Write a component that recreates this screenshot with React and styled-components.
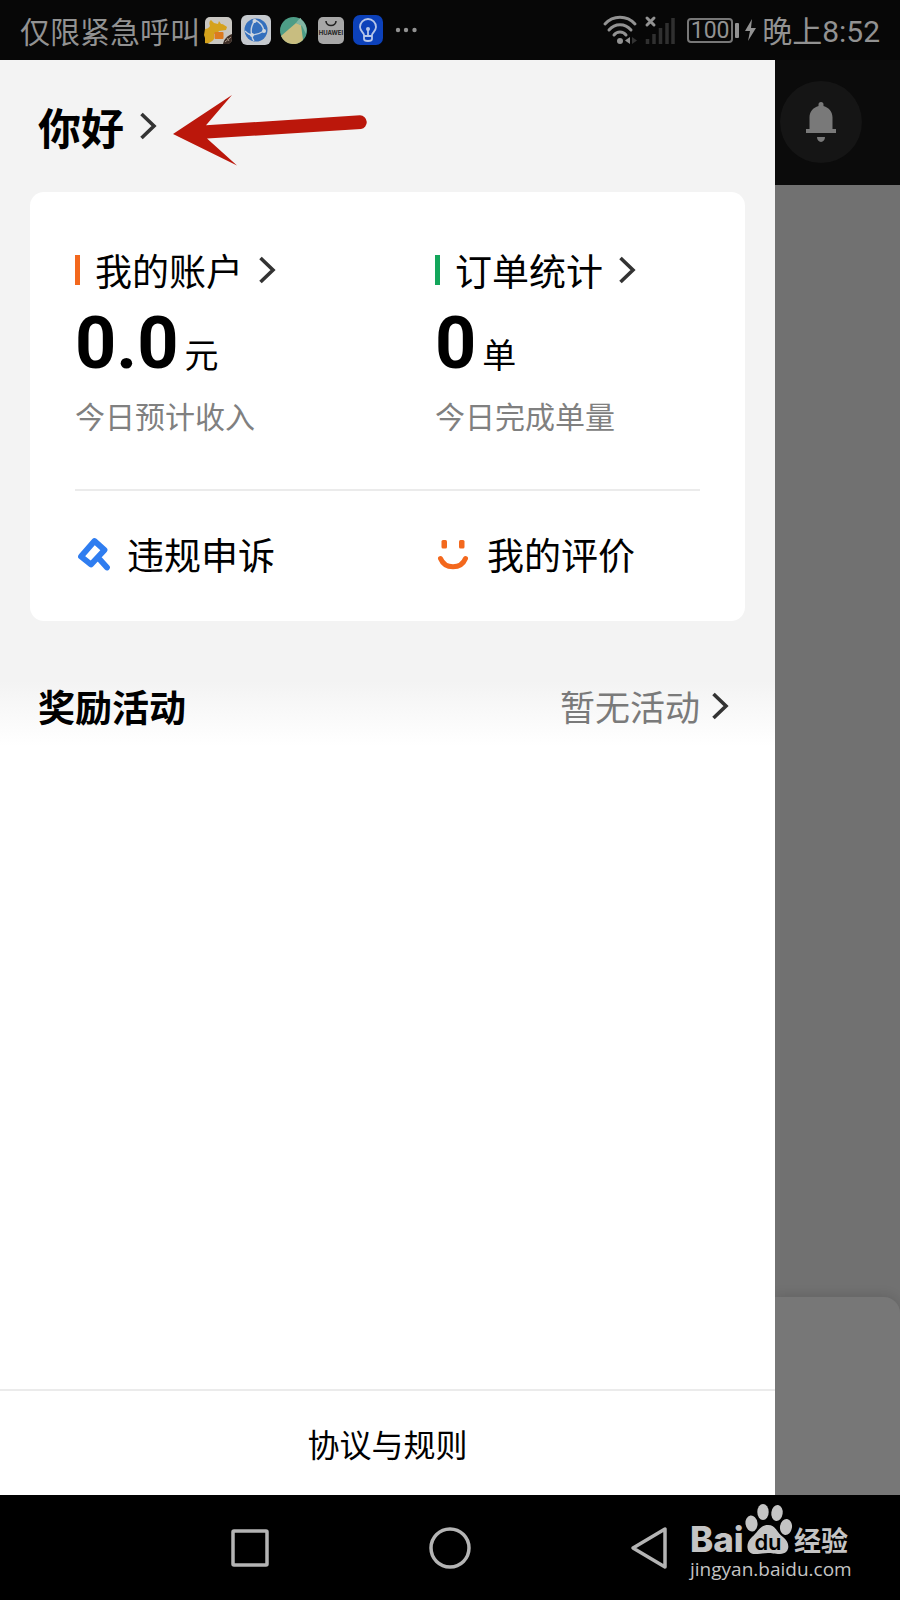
import React from "react";
import styled, { createGlobalStyle } from "styled-components";

const GlobalStyle = createGlobalStyle`
  * { box-sizing: border-box; }
  body {
    margin: 0;
    background: #000;
    color: #000;
    font-family: "Noto Sans CJK SC", sans-serif;
  }
  h1, h2, p { margin: 0; }
  button {
    border: 0;
    padding: 0;
    background: none;
    color: inherit;
    font: inherit;
    text-align: left;
    cursor: pointer;
  }
  a { color: inherit; text-decoration: none; }
  svg { display: block; flex: none; overflow: visible; }
`;

const Page = styled.div`
  display: flex;
  flex-direction: column;
  min-height: 100vh;
`;

/* Status bar */
const StatusBar = styled.header`
  display: flex;
  align-items: center;
  justify-content: space-between;
  height: 60px;
  padding: 0 20px;
  background: #070707;
  color: #929292;
  font-size: 30px;
  line-height: 40px;
  white-space: nowrap;
`;

const StatusGroup = styled.div`
  display: flex;
  align-items: center;
  gap: ${({ $gap }) => $gap}px;
`;

const Battery = styled.span`
  display: flex;
  align-items: center;
  gap: 2px;
  &::after {
    content: "";
    width: 4px;
    height: 15px;
    border-radius: 1px;
    background: #929292;
  }
`;

const BatteryLevel = styled.span`
  width: 46px;
  height: 25px;
  border: 2px solid #777;
  border-radius: 4px;
  font-family: Roboto, sans-serif;
  font-size: 23px;
  line-height: 22px;
  text-align: center;
`;

const Digits = styled.span`
  font-family: Roboto, sans-serif;
`;

/* Main area */
const Main = styled.div`
  flex: 1;
  display: grid;
  grid-template-columns: 31fr 5fr;
`;

const Drawer = styled.main`
  display: flex;
  flex-direction: column;
  background: #fff;
`;

const Profile = styled.div`
  display: flex;
  align-items: center;
  gap: 16px;
  height: 132px;
  padding-left: 38px;
  background: #f3f3f3;
`;

const ProfileButton = styled.button`
  display: flex;
  align-items: center;
  gap: 16px;
`;

const Greeting = styled.h1`
  font-size: 43px;
  line-height: 60px;
  font-weight: 700;
`;

const CardArea = styled.div`
  padding: 0 30px;
  background: #f3f3f3;
`;

const Card = styled.section`
  padding: 0 45px;
  border-radius: 14px;
  background: #fff;
`;

const Columns = styled.div`
  display: grid;
  grid-template-columns: 1fr 1fr;
  column-gap: 95px;
`;

const Stats = styled(Columns)`
  padding: 53px 0 52px;
  border-bottom: 2px solid #ebebeb;
`;

const Links = styled(Columns)`
  padding: 37px 0 41px;
`;

const Stat = styled.button`
  display: flex;
  flex-direction: column;
`;

const StatTitle = styled.span`
  display: flex;
  align-items: center;
  height: 50px;
  font-size: 37px;
  line-height: 50px;
  white-space: nowrap;
  &::before {
    content: "";
    width: 5px;
    height: 30px;
    margin-right: 15px;
    background: ${({ $accent }) => $accent};
  }
  svg { margin-left: 16px; }
`;

const StatValue = styled.span`
  display: flex;
  align-items: baseline;
  gap: 6px;
  height: 98px;
  font-family: Roboto, sans-serif;
  font-size: 72px;
  line-height: 98px;
  font-weight: 700;
`;

const Unit = styled.span`
  font-family: "Noto Sans CJK SC", sans-serif;
  font-size: 34px;
  font-weight: 400;
`;

const StatNote = styled.span`
  font-size: 30px;
  line-height: 44px;
  color: #808080;
  white-space: nowrap;
`;

const LinkButton = styled.button`
  display: flex;
  align-items: center;
  gap: 17px;
  font-size: 37px;
  line-height: 52px;
  white-space: nowrap;
`;

const Rewards = styled.section`
  display: flex;
  align-items: center;
  justify-content: space-between;
  height: 170px;
  padding: 0 46px 0 38px;
  background: linear-gradient(#f3f3f3 60px, #fff 125px);
`;

const RewardsTitle = styled.h2`
  font-size: 37px;
  line-height: 52px;
  font-weight: 700;
`;

const RewardsButton = styled.button`
  display: flex;
  align-items: center;
  gap: 12px;
  font-size: 35px;
  line-height: 52px;
  color: #7a7a7a;
`;

const Rules = styled.footer`
  display: flex;
  align-items: center;
  justify-content: center;
  height: 106px;
  margin-top: auto;
  border-top: 2px solid #ebebeb;
  font-size: 32px;
  line-height: 48px;
`;

/* Dimmed page behind the drawer */
const Backdrop = styled.aside`
  display: flex;
  flex-direction: column;
  overflow: hidden;
  background: #717171;
`;

const BackdropBar = styled.div`
  height: 125px;
  padding: 21px 5px;
  background: #0b0b0b;
`;

const BellButton = styled.button`
  display: grid;
  place-items: center;
  width: 82px;
  height: 82px;
  border-radius: 50%;
  background: #151515;
`;

const Sheet = styled.div`
  height: 198px;
  margin-top: auto;
  border-top-right-radius: 16px;
  background: #777;
  box-shadow: 0 -2px 12px rgba(0, 0, 0, 0.12);
`;

/* System navigation */
const NavBar = styled.nav`
  position: relative;
  display: flex;
  align-items: center;
  justify-content: center;
  gap: 156px;
  height: 105px;
  background: #000;
`;

const Watermark = styled.a`
  position: absolute;
  top: 4px;
  right: 40px;
  width: 170px;
  color: #c4c4c4;
  font-family: "Open Sans", "Noto Sans", sans-serif;
  font-size: 19px;
  font-weight: 500;
  line-height: 24px;
`;

const Chevron = () => (
  <svg width="17" height="28" viewBox="0 0 17 28" fill="none" stroke="#333" strokeWidth="3.600" aria-hidden="true">
    <path d="M1.500 2 14 14 1.500 26" />
  </svg>
);

const PointerArrow = () => (
  <svg width="197" height="80" viewBox="0 0 197 80" fill="#bb170b" aria-hidden="true">
    <path d="M0 48 59 9 33 39.300 187 29.300a6.900 6.900 0 0 1 1 13.700L34 52.600 64 79.600Z" />
  </svg>
);

const Gavel = () => (
  <svg width="35" height="36" viewBox="0 0 35 36" fill="none" stroke="#2f7df0" strokeWidth="5.800" strokeLinejoin="round" strokeLinecap="round" aria-hidden="true">
    <path d="M19.500 5 29.500 14 16 28.500 6 20.500ZM23 21.500 32 31.500" />
  </svg>
);

const Smile = () => (
  <svg width="35" height="36" viewBox="0 0 35 36" aria-hidden="true">
    <g fill="#f3681d">
      <rect x="6.500" y="4" width="5.500" height="8.500" rx="1.500" />
      <rect x="24" y="4" width="5.500" height="8.500" rx="1.500" />
    </g>
    <path d="M5.500 22.500C10 33.500 26 33.500 30.500 22.500" fill="none" stroke="#f3681d" strokeWidth="5" strokeLinecap="round" />
  </svg>
);

const Bell = () => (
  <svg width="32" height="40" viewBox="0 0 32 40" fill="#797979" aria-hidden="true">
    <path d="M13.500 4V2.500a2.500 2.500 0 0 1 5 0V4C24 5.500 27.500 10 27.500 15.500V27H31v4H1v-4h3.500V15.500C4.500 10 8 5.500 13.500 4ZM12 35h8a4 5 0 0 1-8 0Z" />
  </svg>
);

const AppIcons = () => (
  <svg width="214" height="30" viewBox="0 0 214 30" aria-hidden="true">
    <rect x="1" y="2" width="27" height="27" rx="5" fill="#c9c7c2" />
    <path d="M1 14c2 0 4-1 5-3-1-2-1-5 1-6l3 3 4 1 1-3 2 3c3 0 4 2 6 3l-1 3-7 1c-1 2-3 3-5 3v5c-2 3-6 5-9 4v-5l-1-3Z" fill="#d5a21c" />
    <rect x="10.500" y="17" width="9" height="7" rx="1" fill="#dc7a20" />
    <path d="M28 19v5q0 5-5 5h-4c1-5 4-8 9-10Z" fill="#3b2c25" />
    <path d="m21 27 6-5M23 23l2 3" stroke="#a89484" />
    <rect x="37" width="30" height="30" rx="6" fill="#c5c9ce" />
    <circle cx="52" cy="15" r="11.500" fill="#346fbd" />
    <path d="M51 5c-4 6-5 10-3 15M49 20c5-1 8-2 11-4M51 5c5 2 8 6 9 11M41 16c2 2 4 4 7 4 0 2 0 4 2 6" fill="none" stroke="#c5d0df" strokeWidth="1.400" />
    <g fill="#d0d7df"><circle cx="50.500" cy="6" r="2" /><circle cx="48" cy="20" r="2" /><circle cx="60" cy="16" r="2" /></g>
    <circle cx="89.500" cy="15.500" r="13.500" fill="#4d9d86" />
    <path d="M77 21 92 8l5 2 2 15a13.500 13.500 0 0 1-22-4Z" fill="#c8bd80" />
    <path d="M92 8q5-7 5-4 7 6 5 15l-4-8Z" fill="#83b6a4" />
    <rect x="114" y="2" width="26" height="27" rx="5" fill="#a7a7a7" />
    <path d="M122 6c0 6 10 6 10 0" fill="none" stroke="#222" strokeWidth="1.600" />
    <text x="127" y="20" fontSize="6" fontWeight="700" fontFamily="Inter, sans-serif" textAnchor="middle" fill="#222">HUAWEI</text>
    <rect x="149" width="30" height="30" rx="7" fill="#0c41ba" />
    <path d="M160 20c0-2-4-4-4-8a8 8 0 0 1 16 0c0 4-4 6-4 8v4q0 2-4 2t-4-2ZM160 21h8M164 21v-6" fill="none" stroke="#b7c6e8" strokeWidth="1.800" />
    <circle cx="164" cy="14" r="2" fill="#b7c6e8" />
    <g fill="#929292"><circle cx="194" cy="15" r="2.200" /><circle cx="202" cy="15" r="2.200" /><circle cx="210.500" cy="15" r="2.200" /></g>
  </svg>
);

const WifiSignal = () => (
  <svg width="78" height="30" viewBox="0 0 78 30" aria-hidden="true">
    <g fill="none" stroke="#929292" strokeWidth="3" strokeLinecap="round">
      <path d="M2 9c8-9 22-9 30 0M6 15c6-7 16-7 22 0M11 20c3-4 9-4 12 0" />
      <path d="m44 3 7 7M51 3l-7 7" />
    </g>
    <circle cx="17" cy="26" r="3" fill="#929292" />
    <path d="M27 22v7l-5-3.500Z" fill="#929292" />
    <path d="M29 22v7l5-3.500Z" fill="#333" />
    <path d="M44.500 24v5M51 19v10M57.500 13v16M64 8v21M70 3v26" stroke="#303030" strokeWidth="3.500" />
  </svg>
);

const Bolt = () => (
  <svg width="11" height="22" viewBox="0 0 11 22" fill="#929292" aria-hidden="true">
    <path d="M7 0 0 12h5L3 22l8-13H6Z" />
  </svg>
);

const NavIcon = ({ children }) => (
  <svg width="44" height="44" viewBox="0 0 44 44" fill="none" stroke="#b4b4b4" strokeWidth="3.500" strokeLinejoin="round" aria-hidden="true">
    {children}
  </svg>
);

const BaiduLogo = () => (
  <svg width="170" height="58" viewBox="0 -4 170 58" fill="#c4c4c4" role="img" aria-label="Baidu 经验">
    <text x="0" y="49" fontFamily="Inter, sans-serif" fontSize="35" fontWeight="800">Bai</text>
    <ellipse cx="61.500" cy="20.500" rx="6" ry="8" transform="rotate(-8 61.500 20.500)" />
    <ellipse cx="73" cy="9" rx="5.700" ry="8" />
    <ellipse cx="87" cy="10" rx="5.700" ry="8" transform="rotate(8 87 10)" />
    <ellipse cx="96" cy="24" rx="6" ry="8" transform="rotate(8 96 24)" />
    <path d="M78 22c8 0 9 8 15 12 8 6 7 17-3 17-6 0-8-1-12-1s-7 1-13 1c-9 0-10-11-3-17 6-5 8-12 16-12Z" />
    <text x="78" y="47" fontFamily="Inter, sans-serif" fontSize="22" fontWeight="600" textAnchor="middle" fill="#000">du</text>
    <text x="104" y="48" fontFamily='"Noto Sans CJK SC", sans-serif' fontSize="27" fontWeight="700">经验</text>
  </svg>
);

const stats = [
  { title: "我的账户", accent: "#f3681d", value: "0.0", unit: "元", note: "今日预计收入" },
  { title: "订单统计", accent: "#13a65b", value: "0", unit: "单", note: "今日完成单量" },
];

export default function App() {
  return (
    <Page>
      <GlobalStyle />
      <StatusBar>
        <StatusGroup $gap={4}>
          <span>仅限紧急呼叫</span>
          <AppIcons />
        </StatusGroup>
        <StatusGroup $gap={6}>
          <WifiSignal />
          <Battery><BatteryLevel>100</BatteryLevel></Battery>
          <Bolt />
          <span>晚上<Digits>8:52</Digits></span>
        </StatusGroup>
      </StatusBar>

      <Main>
        <Drawer>
          <Profile>
            <ProfileButton type="button">
              <Greeting>你好</Greeting>
              <Chevron />
            </ProfileButton>
            <PointerArrow />
          </Profile>

          <CardArea>
            <Card>
              <Stats>
                {stats.map((s) => (
                  <Stat type="button" key={s.title}>
                    <StatTitle $accent={s.accent}>{s.title}<Chevron /></StatTitle>
                    <StatValue>{s.value}<Unit>{s.unit}</Unit></StatValue>
                    <StatNote>{s.note}</StatNote>
                  </Stat>
                ))}
              </Stats>
              <Links>
                <LinkButton type="button"><Gavel />违规申诉</LinkButton>
                <LinkButton type="button"><Smile />我的评价</LinkButton>
              </Links>
            </Card>
          </CardArea>

          <Rewards>
            <RewardsTitle>奖励活动</RewardsTitle>
            <RewardsButton type="button">暂无活动<Chevron /></RewardsButton>
          </Rewards>

          <Rules><a href="#rules">协议与规则</a></Rules>
        </Drawer>

        <Backdrop>
          <BackdropBar>
            <BellButton type="button" aria-label="通知"><Bell /></BellButton>
          </BackdropBar>
          <Sheet />
        </Backdrop>
      </Main>

      <NavBar>
        <button type="button" aria-label="最近任务">
          <NavIcon><rect x="5" y="5" width="34" height="34" rx="1" /></NavIcon>
        </button>
        <button type="button" aria-label="主页">
          <NavIcon><circle cx="22" cy="22" r="19" /></NavIcon>
        </button>
        <button type="button" aria-label="返回">
          <NavIcon><path d="M5 22 37 3v38Z" /></NavIcon>
        </button>
        <Watermark href="#jingyan">
          <BaiduLogo />
          jingyan.baidu.com
        </Watermark>
      </NavBar>
    </Page>
  );
}
